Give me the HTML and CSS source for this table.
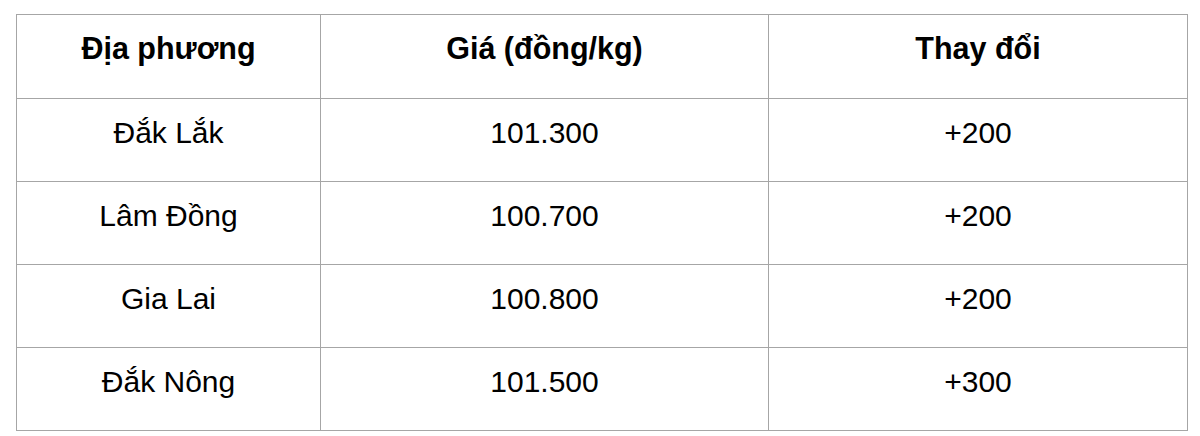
FILE: index.html
```html
<!DOCTYPE html>
<html lang="vi">
<head>
<meta charset="utf-8">
<link rel="stylesheet" href="styles.css">
</head>
<body>
<table class="price-table">
  <colgroup>
    <col class="c1"><col class="c2"><col class="c3">
  </colgroup>
  <thead>
    <tr><th>Địa phương</th><th>Giá (đồng/kg)</th><th>Thay đổi</th></tr>
  </thead>
  <tbody>
    <tr><td>Đắk Lắk</td><td>101.300</td><td>+200</td></tr>
    <tr><td>Lâm Đồng</td><td>100.700</td><td>+200</td></tr>
    <tr><td>Gia Lai</td><td>100.800</td><td>+200</td></tr>
    <tr><td>Đắk Nông</td><td>101.500</td><td>+300</td></tr>
  </tbody>
</table>
</body>
</html>
```
FILE: styles.css
```css
html, body {
  margin: 0;
  padding: 0;
  background: #ffffff;
}
body {
  padding: 14px 0 0 16px;
  font-family: "Liberation Sans", Arial, sans-serif;
  color: #000;
}
.price-table {
  border-collapse: collapse;
  width: 1171px;
  table-layout: fixed;
}
.c1 { width: 304px; }
.c2 { width: 448px; }
.c3 { width: 419px; }
.price-table th,
.price-table td {
  border: 1px solid #a6a6a6;
  text-align: center;
  vertical-align: middle;
  font-size: 30px;
  padding: 0 0 14px 0;
  box-sizing: border-box;
}
.price-table th {
  height: 84px;
  font-weight: bold;
  font-size: 30.5px;
  padding-bottom: 16px;
}
.price-table td {
  height: 83px;
  font-weight: normal;
}
```
